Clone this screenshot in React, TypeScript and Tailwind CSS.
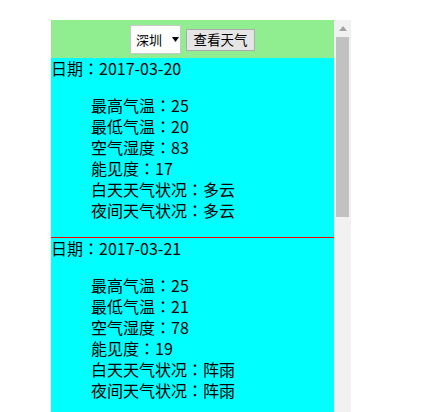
import React from "react";

interface Day {
  date: string;
  high: number;
  low: number;
  humidity: number;
  visibility: number;
  dayWeather: string;
  nightWeather: string;
}

const days: Day[] = [
  { date: "2017-03-20", high: 25, low: 20, humidity: 83, visibility: 17, dayWeather: "多云", nightWeather: "多云" },
  { date: "2017-03-21", high: 25, low: 21, humidity: 78, visibility: 19, dayWeather: "阵雨", nightWeather: "阵雨" },
];

function DayBlock({ day }: { day: Day }) {
  return (
    <div className="border-b border-[#ff0000]">
      <div>日期：{day.date}</div>
      <ul className="my-4 pl-10">
        <li>最高气温：{day.high}</li>
        <li>最低气温：{day.low}</li>
        <li>空气湿度：{day.humidity}</li>
        <li>能见度：{day.visibility}</li>
        <li>白天天气状况：{day.dayWeather}</li>
        <li>夜间天气状况：{day.nightWeather}</li>
      </ul>
    </div>
  );
}

export default function App() {
  return (
    <div
      className="h-[412px] overflow-hidden bg-white pt-[20px] pl-[51px] text-black"
      style={{ fontFamily: '"Noto Sans CJK TC", "Noto Sans CJK SC", sans-serif' }}
    >
      <div className="flex h-[392px] w-[300px] overflow-hidden">
        {/* 内容区 */}
        <div className="w-[283px] shrink-0 bg-[#00ffff] text-[16px] leading-[21px]">
          <div className="flex h-[38px] items-center justify-center gap-[5px] bg-[#90ee90] pt-[1px]">
            <div className="flex h-[29px] w-[51px] items-center border border-[#c8c8c8] bg-white pl-[5px] text-[13px] leading-none">
              <span>深圳</span>
              <svg className="ml-[10px]" width="7" height="5" viewBox="0 0 7 5">
                <polygon points="0,0 7,0 3.5,5" fill="#000" />
              </svg>
            </div>
            <button className="h-[22px] w-[69px] border border-[#adadad] bg-[#e5e5e5] text-[13.5px] leading-none">
              查看天气
            </button>
          </div>
          {days.map((d) => (
            <DayBlock key={d.date} day={d} />
          ))}
        </div>

        {/* 滚动条 */}
        <div className="flex w-[17px] shrink-0 flex-col items-center bg-[#f1f1f1]">
          <div className="flex h-[17px] items-center justify-center">
            <svg width="8" height="5" viewBox="0 0 8 5">
              <polygon points="4,0 8,5 0,5" fill="#a3a3a3" />
            </svg>
          </div>
          <div className="h-[180px] w-[13px] bg-[#c1c1c1]" />
        </div>
      </div>
    </div>
  );
}
